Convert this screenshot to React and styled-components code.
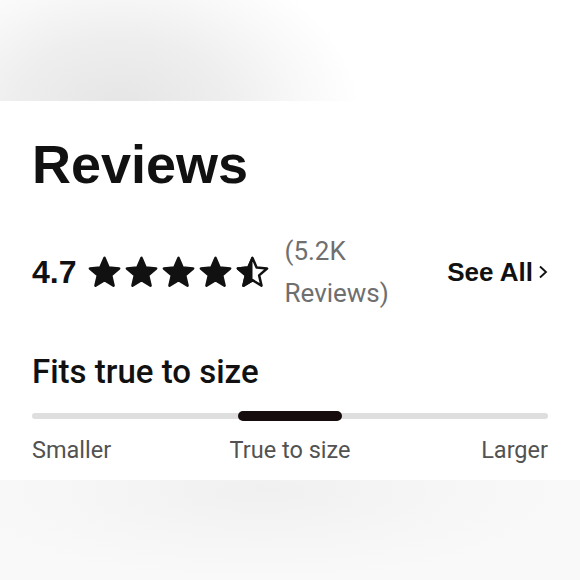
import React from 'react';
import styled, { createGlobalStyle } from 'styled-components';

const Global = createGlobalStyle`
  body {
    margin: 0;
    background: #fff;
    font-family: "Liberation Sans", Arial, sans-serif;
  }
`;

const Page = styled.div`
  width: 580px;
  height: 580px;
  display: flex;
  flex-direction: column;
  overflow: hidden;
`;

const BlurBand = styled.div`
  height: ${props => props.h}px;
  flex: none;
  background: ${props => props.bg};
`;

const Card = styled.section`
  background: #fff;
  padding: 36px 32px 16px;
  flex: none;
`;

const Title = styled.h1`
  margin: 0;
  font-family: "Liberation Sans", Arial, sans-serif;
  font-weight: 700;
  font-size: 54px;
  line-height: 1;
  color: #111;
`;

const RatingRow = styled.div`
  display: flex;
  align-items: center;
  margin-top: 39px;
`;

const Score = styled.span`
  font-family: "Liberation Sans", Arial, sans-serif;
  font-weight: 700;
  font-size: 32px;
  color: #111;
`;

const Stars = styled.div`
  display: flex;
  margin-left: 11px;
  gap: 2px;
`;

const Count = styled.span`
  font-family: Roboto, sans-serif;
  font-size: 26px;
  line-height: 42px;
  color: #6f6f6f;
  margin-left: 14px;
  width: 130px;
`;

const SeeAll = styled.a`
  margin-left: auto;
  display: flex;
  align-items: center;
  gap: 5px;
  font-family: "Liberation Sans", Arial, sans-serif;
  font-weight: 700;
  font-size: 26px;
  color: #111;
  text-decoration: none;
`;

const FitTitle = styled.h2`
  margin: 38px 0 0;
  font-family: Roboto, sans-serif;
  font-weight: 500;
  font-size: 33px;
  line-height: 1.2;
  color: #111;
`;

const Slider = styled.div`
  margin-top: 19px;
  height: 10px;
  display: flex;
  align-items: center;
  position: relative;
`;

const Track = styled.div`
  flex: 1;
  height: 6px;
  border-radius: 3px;
  background: #dedede;
`;

const Thumb = styled.div`
  position: absolute;
  top: 0;
  height: 10px;
  border-radius: 5px;
  background: #160b0d;
`;

const Labels = styled.div`
  margin-top: 15px;
  display: grid;
  grid-template-columns: 1fr auto 1fr;
  font-family: Roboto, sans-serif;
  font-size: 23.5px;
  line-height: 1.2;
  color: #525252;
`;

const Label = styled.span`
  justify-self: ${props => props.align || 'center'};
`;

const STAR = 'M12 17.27L18.18 21l-1.64-7.03L22 9.24l-7.19-.61L12 2 9.19 8.63 2 9.24l5.46 4.73L5.82 21z';

const Star = ({ half }) => (
  <svg width="35" height="35" viewBox="0 0 24 24">
    {half ? (
      <>
        <defs>
          <clipPath id="leftHalf">
            <rect x="0" y="0" width="12" height="24" />
          </clipPath>
        </defs>
        <path
          d={STAR}
          fill="none"
          stroke="#111"
          strokeWidth="1.7"
          strokeLinejoin="round"
        />
        <path
          d={STAR}
          fill="#111"
          stroke="#111"
          strokeWidth="1.8"
          strokeLinejoin="round"
          clipPath="url(#leftHalf)"
        />
      </>
    ) : (
      <path d={STAR} fill="#111" stroke="#111" strokeWidth="1.8" strokeLinejoin="round" />
    )}
  </svg>
);

const Chevron = () => (
  <svg width="10" height="14" viewBox="0 0 10 14">
    <polyline points="2,1.5 8,7 2,12.5" fill="none" stroke="#111" strokeWidth="1.8" />
  </svg>
);

export default function App() {
  const fit = { left: 40, width: 20 };
  return (
    <Page>
      <Global />
      <BlurBand
        h={101}
        bg="radial-gradient(ellipse 240px 160px at 120px 110px, #e5e5e5 0%, #eeeeee 45%, #f8f8f8 75%, #fff 100%), #fff"
      />
      <Card>
        <Title>Reviews</Title>
        <RatingRow>
          <Score>4.7</Score>
          <Stars>
            {[0, 1, 2, 3].map(i => (
              <Star key={i} />
            ))}
            <Star half />
          </Stars>
          <Count>(5.2K Reviews)</Count>
          <SeeAll href="#">
            See All <Chevron />
          </SeeAll>
        </RatingRow>
        <FitTitle>Fits true to size</FitTitle>
        <Slider>
          <Track />
          <Thumb style={{ left: `${fit.left}%`, width: `${fit.width}%` }} />
        </Slider>
        <Labels>
          <Label align="start">Smaller</Label>
          <Label>True to size</Label>
          <Label align="end">Larger</Label>
        </Labels>
      </Card>
      <BlurBand
        h={102}
        bg="radial-gradient(ellipse 300px 90px at 260px 10px, #f0f0f0 0%, #f6f6f6 60%, #f9f9f9 100%), #f9f9f9"
      />
    </Page>
  );
}
